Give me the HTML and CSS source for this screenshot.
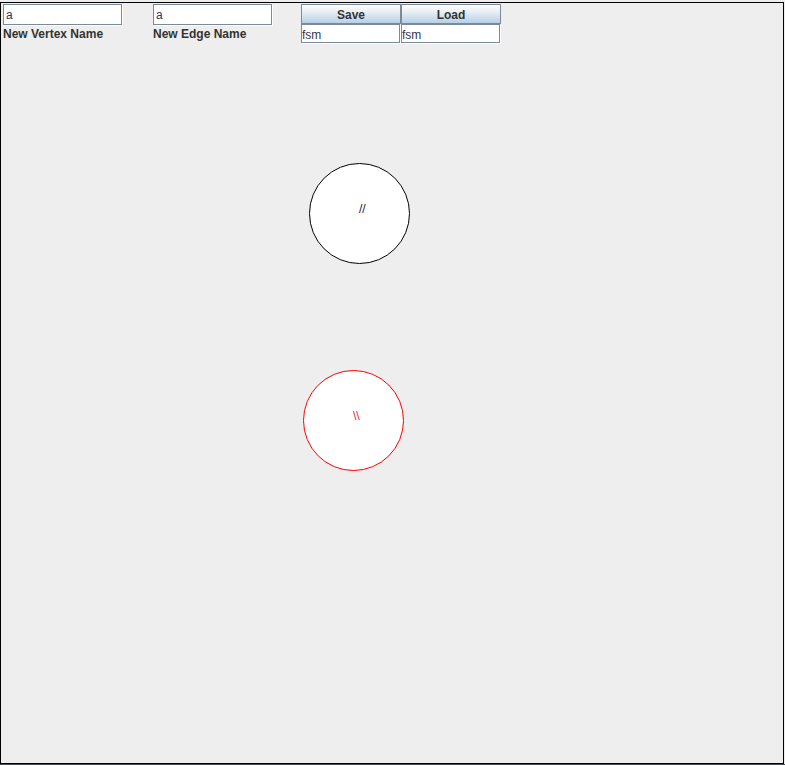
FILE: index.html
```html
<!DOCTYPE html>
<html>
<head>
<meta charset="utf-8">
<link rel="stylesheet" href="styles.css">
</head>
<body>
<div class="frame">
  <div class="toolbar">
    <div class="group g1">
      <div class="field wide">a</div>
      <div class="label">New Vertex Name</div>
    </div>
    <div class="group g2">
      <div class="field wide">a</div>
      <div class="label">New Edge Name</div>
    </div>
    <div class="files">
      <div class="btnrow">
        <div class="btn">Save</div>
        <div class="btn">Load</div>
      </div>
      <div class="btnrow">
        <div class="field small">fsm</div>
        <div class="field small">fsm</div>
      </div>
    </div>
  </div>
  <svg class="canvas" width="782" height="760" viewBox="0 0 782 760">
    <circle cx="358.5" cy="210.5" r="50" fill="#fff" stroke="#000" stroke-width="1"/>
    <text x="358" y="209" class="lbl" fill="#000">//</text>
    <circle cx="352.5" cy="417.5" r="50" fill="#fff" stroke="#ff0000" stroke-width="1"/>
    <text x="352" y="416" class="lbl" fill="#ff0000">\\</text>
  </svg>
</div>
<div class="taskbar"></div>
</body>
</html>
```
FILE: styles.css
```css
html, body {
  margin: 0;
  padding: 0;
  background: #eeeeee;
  width: 785px;
  height: 765px;
  overflow: hidden;
  font-family: "Liberation Sans", Arial, sans-serif;
}
.frame {
  position: relative;
  box-sizing: border-box;
  margin-top: 2px;
  width: 784px;
  height: 762px;
  border: 1px solid #000;
  background: #eeeeee;
}
.toolbar {
  position: relative;
  z-index: 1;
  display: flex;
  padding: 1px 0 0 2px;
}
.group {
  display: flex;
  flex-direction: column;
}
.g1 { width: 150px; }
.g2 { width: 148px; }
.field {
  box-sizing: border-box;
  background: #fff;
  border: 1px solid #7a8a99;
  box-shadow: 1px 1px 0 #fff;
  color: #333355;
  font-size: 12px;
  padding-left: 2px;
}
.field.wide {
  width: 119px;
  height: 21px;
  line-height: 21px;
}
.label {
  margin-top: 2px;
  font-size: 12px;
  font-weight: bold;
  color: #333333;
  line-height: 14px;
}
.files {
  display: flex;
  flex-direction: column;
}
.btnrow {
  display: flex;
}
.btn {
  box-sizing: border-box;
  width: 100px;
  height: 20px;
  border: 1px solid #7a8a99;
  background: linear-gradient(to bottom, #ffffff 0%, #e6eef6 40%, #b8cfe5 100%);
  font-size: 12px;
  font-weight: bold;
  color: #333333;
  text-align: center;
  line-height: 20px;
}
.field.small {
  width: 99px;
  height: 19px;
  line-height: 20px;
  margin-right: 1px;
  padding-left: 0;
}
.canvas {
  position: absolute;
  left: 0;
  top: 0;
}
.lbl {
  font-family: "DejaVu Sans", sans-serif;
  font-size: 10px;
}
.taskbar {
  height: 1px;
  background: #4a4f55;
}
```
